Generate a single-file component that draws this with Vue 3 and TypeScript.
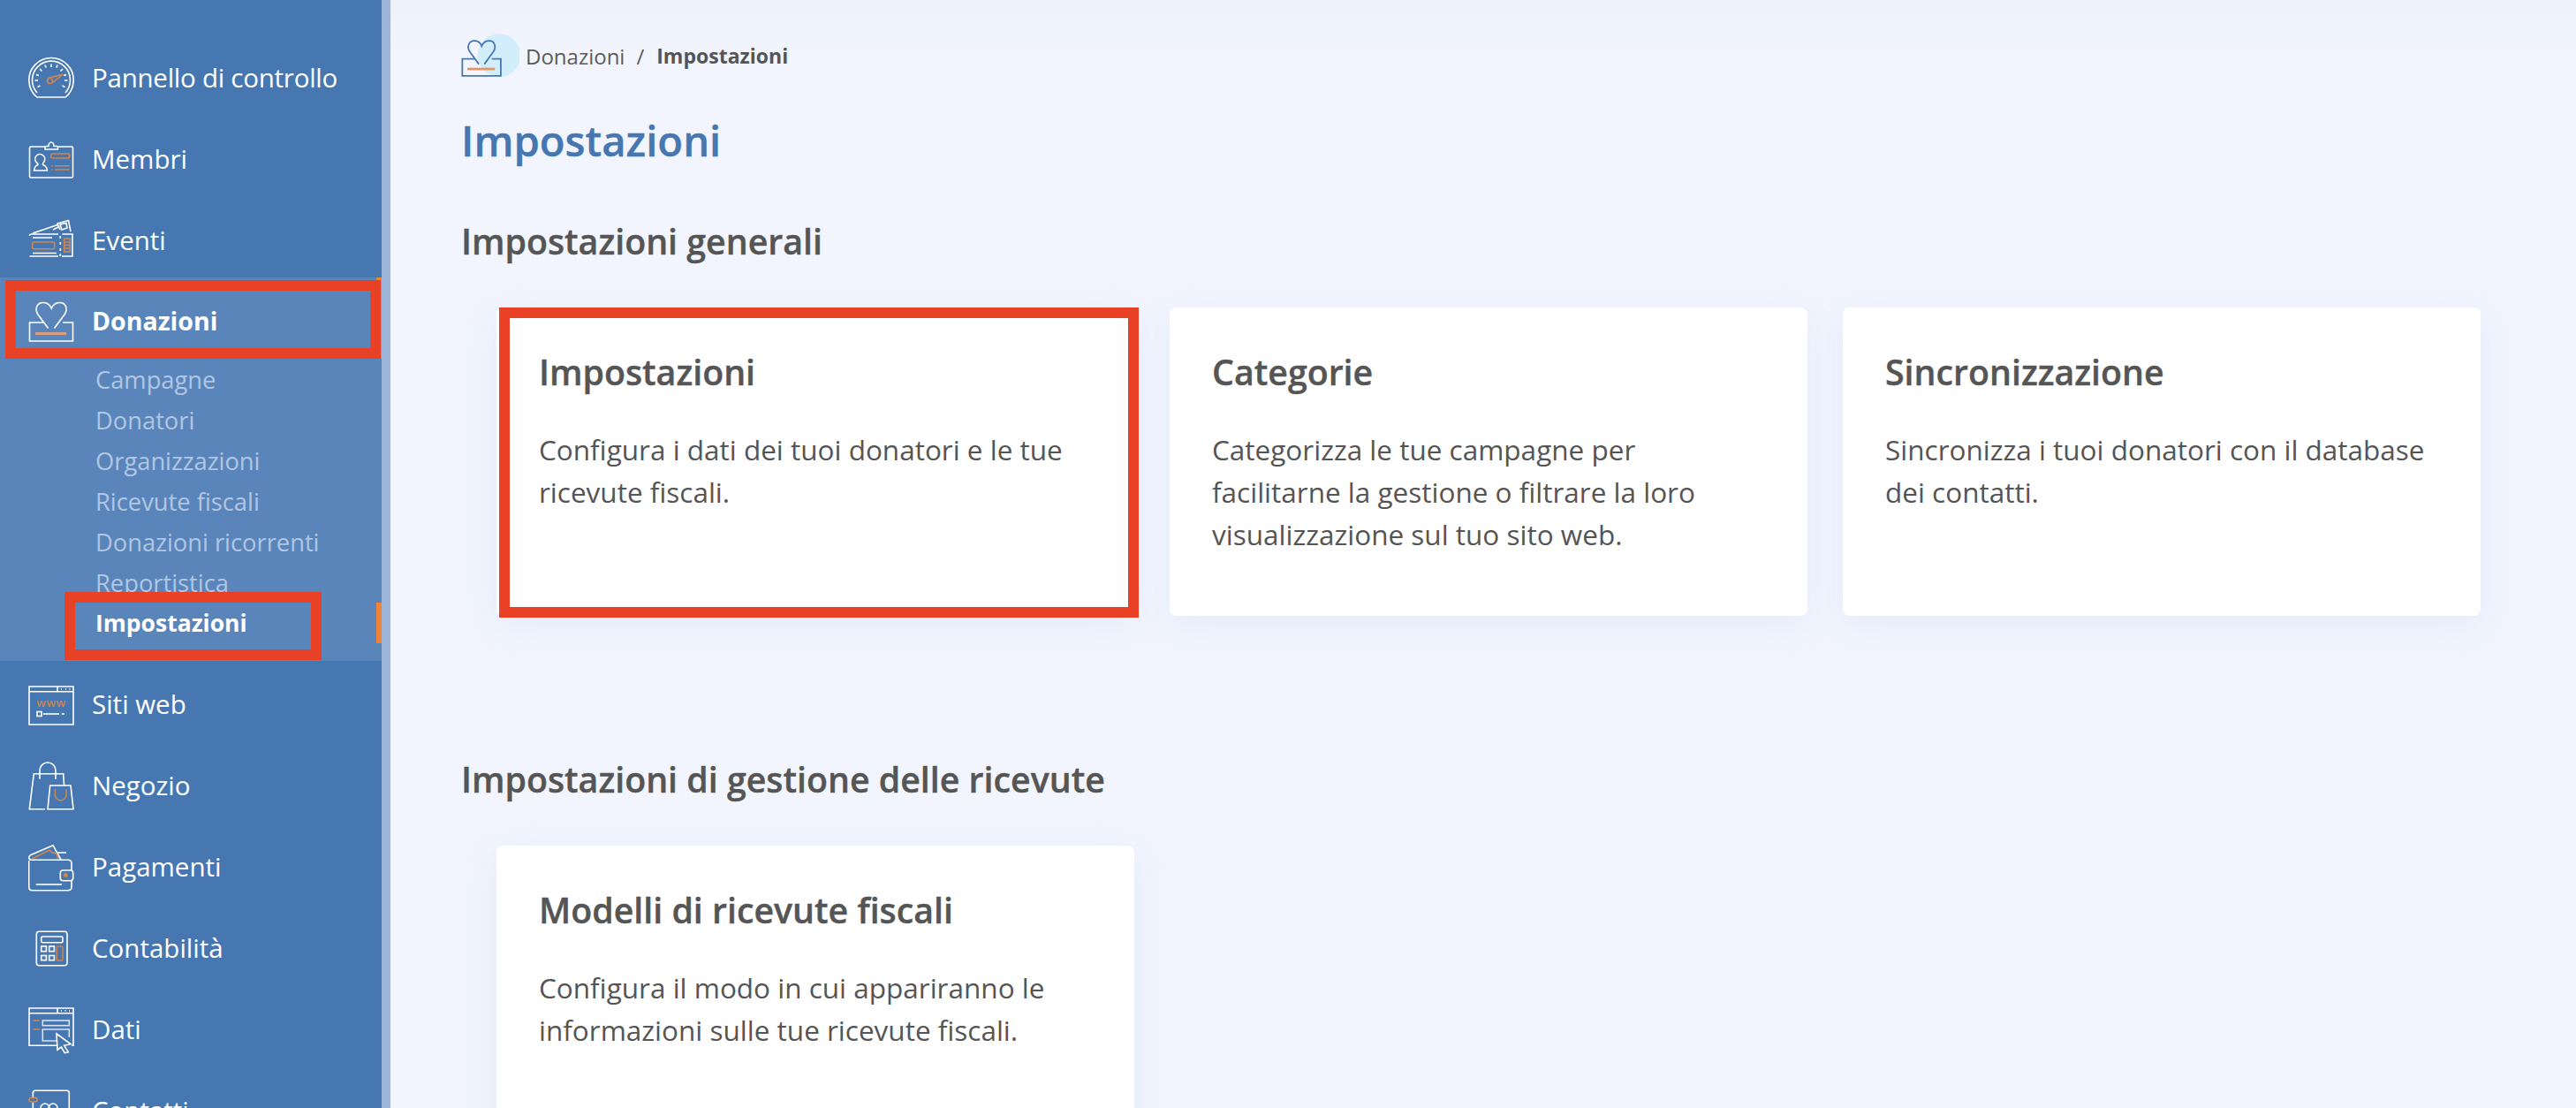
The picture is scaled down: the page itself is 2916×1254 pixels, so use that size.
<script setup lang="ts">
const subItems: string[] = ['Campagne', 'Donatori', 'Organizzazioni', 'Ricevute fiscali', 'Donazioni ricorrenti', 'Reportistica']

interface Card { title: string; lines: string }
const generalCards: Card[] = [
  { title: 'Impostazioni', lines: 'Configura i dati dei tuoi donatori e le tue\nricevute fiscali.' },
  { title: 'Categorie', lines: 'Categorizza le tue campagne per\nfacilitarne la gestione o filtrare la loro\nvisualizzazione sul tuo sito web.' },
  { title: 'Sincronizzazione', lines: 'Sincronizza i tuoi donatori con il database\ndei contatti.' },
]
</script>

<template>
  <div class="app">
    <aside class="sidebar">
      <a class="item">
        <svg class="ico" viewBox="0 0 52 56">
          <path d="M9.800 50H42.200A25.200 25.200 0 1 0 9.800 50Z" />
          <path d="M10 45A21.500 21.500 0 1 1 42 45" />
          <path d="M7.500 31H11M41 31H44.500M13 18 15.500 20.500M39 18 36.500 20.500M26 12.500V16M19 13.500 20 16.500M33 13.500 32 16.500M9 24.500 12 25.500M43 24.500 40 25.500M10.500 38.500 13.500 37M41.500 38.500 38.500 37" />
          <circle class="o" cx="24.500" cy="31.500" r="3" />
          <path class="o" d="M22.500 28.500 38.700 24.300 27 34" />
        </svg>
        <span>Pannello di controllo</span>
      </a>
      <a class="item">
        <svg class="ico" viewBox="0 0 52 56">
          <path d="M19 14H3Q1.500 14 1.500 15.500V47.500Q1.500 49 3 49H49Q50.500 49 50.500 47.500V15.500Q50.500 14 49 14H33.500" />
          <path d="M19 17V14.500Q19 13.500 20 13.500H23A3 4.500 0 0 1 29 13.500H32.500Q33.500 13.500 33.500 14.500V17Z" />
          <path d="M9 31.500A5.500 5.500 0 1 1 17.500 31.500Q16 33 16.500 34.500Q21 36 21.500 41H6.500Q7 36 11 34.500Q11 33 9 31.500Z" />
          <rect class="o" x="25.700" y="22" width="21" height="5" rx="2" />
          <path class="o" d="M30 35.700H46.700M30 40H46.700M26 35.700H27.500M26 40H27.500" />
        </svg>
        <span>Membri</span>
      </a>
      <a class="item">
        <svg class="ico" viewBox="0 0 52 56">
          <path d="M1.500 23Q1.500 21 3.500 21H34M38.500 21H50V46H38M34 46H1.500Z" />
          <path d="M5 20 33 10.500M28 16 34 13M36 16 33 9 45.500 5.500 48 18" />
          <path d="M36 10 43 8.500 44 14 38 16Z" />
          <path d="M5 25H27M5 42.500H32M36.300 23V26M36.300 30V33M36.300 37V40M36.300 43V46" />
          <rect class="o" x="4.700" y="30" width="25" height="7.700" rx="1.500" />
          <rect class="o" x="40.700" y="26" width="6.600" height="15" />
          <path class="o" d="M40.700 30H47.300M40.700 33.500H47.300M40.700 37H47.300" />
        </svg>
        <span>Eventi</span>
      </a>

      <div class="group">
        <span class="mark mark-top" />
        <a class="item active">
          <svg class="ico" viewBox="0 0 52 56">
            <path d="M26 35.500 14.500 20C10 13 14 6 21 6.500 25 6.800 28 9 29.700 13 31.500 9 34.500 6.800 38.500 6.500 45.500 6 49 13 44.500 20L33 35.500" transform="translate(-3.500 0)" />
            <path d="M18 29H1.500V50H50.500V29H39" />
            <path class="o thick" d="M8 41.500H43" />
          </svg>
          <span>Donazioni</span>
        </a>
        <a v-for="s in subItems" :key="s" class="sub">{{ s }}</a>
        <a class="sub current">Impostazioni<span class="mark" /></a>
      </div>

      <a class="item">
        <svg class="ico" viewBox="0 0 52 56">
          <path d="M1 8H51V51H1ZM1 13.700H51M33 8V13.700M37.700 39H41" />
          <path d="M37 10.900H38M42 10.900H43M46.500 10.900H47.500" />
          <rect x="10" y="36.500" width="5" height="5" />
          <text class="www" x="26" y="31" text-anchor="middle">www</text>
          <path d="M17 39H35" />
        </svg>
        <span>Siti web</span>
      </a>
      <a class="item">
        <svg class="ico" viewBox="0 0 52 56">
          <path d="M19 54.700H1.300L6.300 14.700H39.700L40.600 28" />
          <path d="M13 20.700V11A9 9 0 0 1 31 11V20.700" />
          <path d="M22 54.700 24.700 28H48L51 54.700H22Z" />
          <path class="o" d="M30.300 32V38.500A6.300 6.300 0 0 0 43 38.500V32" />
        </svg>
        <span>Negozio</span>
      </a>
      <a class="item">
        <svg class="ico" viewBox="0 0 52 56">
          <path d="M0.700 21V50.700Q0.700 54.700 4.700 54.700H45Q49 54.700 49 50.700V44M49 32V24Q49 20.300 45 20.300H3.500C0 20.300 0 15.500 3 14.500L28 3.700 37 20M33 12H43" />
          <rect x="36.300" y="32" width="14.400" height="11.700" rx="3" />
          <circle class="f" cx="42.300" cy="37.500" r="2.500" />
          <path d="M8.700 48H38" />
          <path class="o" d="M4 19 24 9 27 12 32 13 34 19" />
        </svg>
        <span>Pagamenti</span>
      </a>
      <a class="item">
        <svg class="ico" viewBox="0 0 52 56">
          <rect x="9.300" y="9.300" width="34.700" height="38.400" rx="3" />
          <rect x="14.700" y="15" width="24.300" height="6.700" rx="1.500" />
          <rect x="14.700" y="26" width="5.700" height="5.700" />
          <rect x="23.700" y="26" width="5.700" height="5.700" />
          <rect x="14.700" y="36.500" width="5.700" height="5.200" />
          <rect x="23.700" y="36.500" width="5.700" height="5.200" />
          <rect class="o" x="32.300" y="26" width="6.700" height="16" rx="1.500" />
        </svg>
        <span>Contabilità</span>
      </a>
      <a class="item">
        <svg class="ico" viewBox="0 0 52 56">
          <path d="M33 46.300H1V4H51V46.300H49M1 9.700H51M33 4V9.700" />
          <path d="M37 6.900H38M41.500 6.900H42.500M46 6.900H47" />
          <path class="o" d="M5.300 18H13M5.300 28H13" />
          <rect class="pale" x="16.300" y="18" width="30" height="5.700" />
          <path class="pale" d="M32 41H16.300V28H46.300V37" />
          <path d="M32 33 48 44.700 40.700 46.300 45.300 53.700 41.300 54.700 37.300 48 33 51.300Z" />
        </svg>
        <span>Dati</span>
      </a>
      <a class="item">
        <svg class="ico" viewBox="0 0 52 56">
          <path d="M5.300 13V8Q5.300 5.300 8 5.300H43.600Q46.300 5.300 46.300 8V54M5.300 19V54" />
          <rect class="o" x="1" y="13.500" width="9" height="4.500" rx="2.200" />
          <circle cx="19" cy="25" r="5" />
          <circle cx="28" cy="25" r="5" />
        </svg>
        <span>Contatti</span>
      </a>
    </aside>
    <div class="rail" />

    <main class="main">
      <nav class="crumbs">
        <svg class="crumb-ico" viewBox="0 0 66 50">
          <circle class="crumb-disc" cx="43" cy="24.700" r="24.500" />
          <g class="crumb-lines" transform="translate(0 2.300) scale(0.89 0.91)">
            <path d="M26 35.500 14.500 20C10 13 14 6 21 6.500 25 6.800 28 9 29.700 13 31.500 9 34.500 6.800 38.500 6.500 45.500 6 49 13 44.500 20L33 35.500" transform="translate(-3.500 0)" />
            <path d="M18 29H1.500V50H50.500V29H39" />
            <path class="crumb-o" d="M8 41.500H43" />
          </g>
        </svg>
        <span class="crumb">Donazioni</span>
        <span class="sep">/</span>
        <strong class="crumb-cur">Impostazioni</strong>
      </nav>

      <h1>Impostazioni</h1>

      <h2>Impostazioni generali</h2>
      <section class="cards">
        <article v-for="(c, i) in generalCards" :key="c.title" class="card">
          <span v-if="i === 0" class="redbox redbox-card" />
          <h3>{{ c.title }}</h3>
          <p>{{ c.lines }}</p>
        </article>
      </section>

      <h2 class="second">Impostazioni di gestione delle ricevute</h2>
      <section class="cards">
        <article class="card">
          <h3>Modelli di ricevute fiscali</h3>
          <p>{{ 'Configura il modo in cui appariranno le\ninformazioni sulle tue ricevute fiscali.' }}</p>
        </article>
      </section>
    </main>

    <span class="redbox redbox-don" />
    <span class="redbox redbox-imp" />
  </div>
</template>

<style>
html, body { margin: 0; overflow: hidden; background: #f2f5fe; }
</style>

<style scoped>
.app {
  position: relative;
  display: flex;
  height: 1254px;
  overflow: hidden;
  font-family: "Open Sans", "Noto Sans", sans-serif;
  background: linear-gradient(#edf1fb, #f2f5fe 60px);
}
.sidebar {
  width: 432px;
  flex: none;
  display: flex;
  flex-direction: column;
  gap: 8px;
  padding-top: 46px;
  box-sizing: border-box;
  height: 1254px;
  overflow: hidden;
  background: #4677b0;
  color: #fff;
}
.rail { width: 10px; flex: none; background: #9db5d8; }
.item {
  height: 84px;
  flex: none;
  display: flex;
  align-items: center;
  gap: 20px;
  padding-left: 32px;
  font-size: 29.500px;
}
.item span { position: relative; top: -1px; }
.item:first-child span { letter-spacing: -0.250px; }
.ico { width: 52px; height: 56px; flex: none; fill: none; stroke: #fff; stroke-width: 1.600; }
.ico .o { stroke: #d08450; }
.ico .thick { stroke-width: 3; stroke: #d9a07f; }
.ico .f { fill: #d08450; stroke: none; }
.ico .pale { stroke: #d5e2f3; }
.ico .www { fill: #d08450; stroke: none; font: 600 13px "Open Sans", sans-serif; letter-spacing: 0.500px; }
.group {
  position: relative;
  flex: none;
  margin: -8px 0 -1px;
  padding: 8px 0 20px;
  background: #5a85bb;
}
.active { font-weight: 700; font-size: 28.500px; }
.sub {
  display: flex;
  align-items: center;
  height: 46px;
  padding-left: 108px;
  font-size: 27.300px;
  color: #b1c6e2;
  position: relative;
}
.current { color: #fff; font-weight: 700; font-size: 26.500px; }
.mark { position: absolute; right: 0; top: 0; bottom: 0; width: 6px; background: #f08336; }
.mark-top { top: 0; bottom: auto; height: 92px; }

.main { flex: 1; padding: 38px 0 0 80px; min-width: 0; color: #555; }
.crumbs { display: flex; align-items: center; height: 50px; font-size: 24px; }
.crumb-ico { width: 66px; height: 50px; margin-right: 7px; flex: none; }
.crumb-disc { fill: #d3eefb; }
.crumb-lines { fill: none; stroke: #4677b0; stroke-width: 2; }
.crumb-o { stroke: #e8935a; stroke-width: 3; }
.crumb { color: #5c5c5c; }
.sep { margin: 0 14px 0 13px; color: #5c5c5c; }
.crumb-cur { font-weight: 700; color: #555; font-size: 23px; }
h1 { margin: 41px 0 0; font-size: 47.200px; line-height: 60px; font-weight: 600; color: #4677b0; -webkit-text-stroke: 0.400px #4677b0; }
h2 { margin: 59px 0 0; font-size: 39.300px; line-height: 50px; font-weight: 600; color: #555; -webkit-text-stroke: 0.400px #555; }
h2.second { margin-top: 160px; }
.cards {
  display: grid;
  grid-template-columns: repeat(3, 722px);
  gap: 40px;
  margin: 50px 0 0 40px;
}
.card {
  position: relative;
  box-sizing: border-box;
  min-height: 349px;
  padding: 47px 48px 67px;
  background: #fff;
  border-radius: 8px;
  box-shadow: 0 10px 40px rgba(80, 110, 220, 0.08);
}
h3 { margin: 0; font-size: 39.300px; line-height: 52px; font-weight: 600; color: #555; -webkit-text-stroke: 0.400px #555; }
p { margin: 38px 0 0; font-size: 31.500px; line-height: 48px; color: #555; white-space: pre-line; }
.redbox { position: absolute; border: 12px solid #e94125; box-sizing: border-box; pointer-events: none; }
.redbox-card { left: 3px; top: 0; width: 724px; height: 351px; }
.redbox-don { left: 6px; top: 317px; width: 425px; height: 89px; }
.redbox-imp { left: 73px; top: 670px; width: 291px; height: 77px; }
</style>
